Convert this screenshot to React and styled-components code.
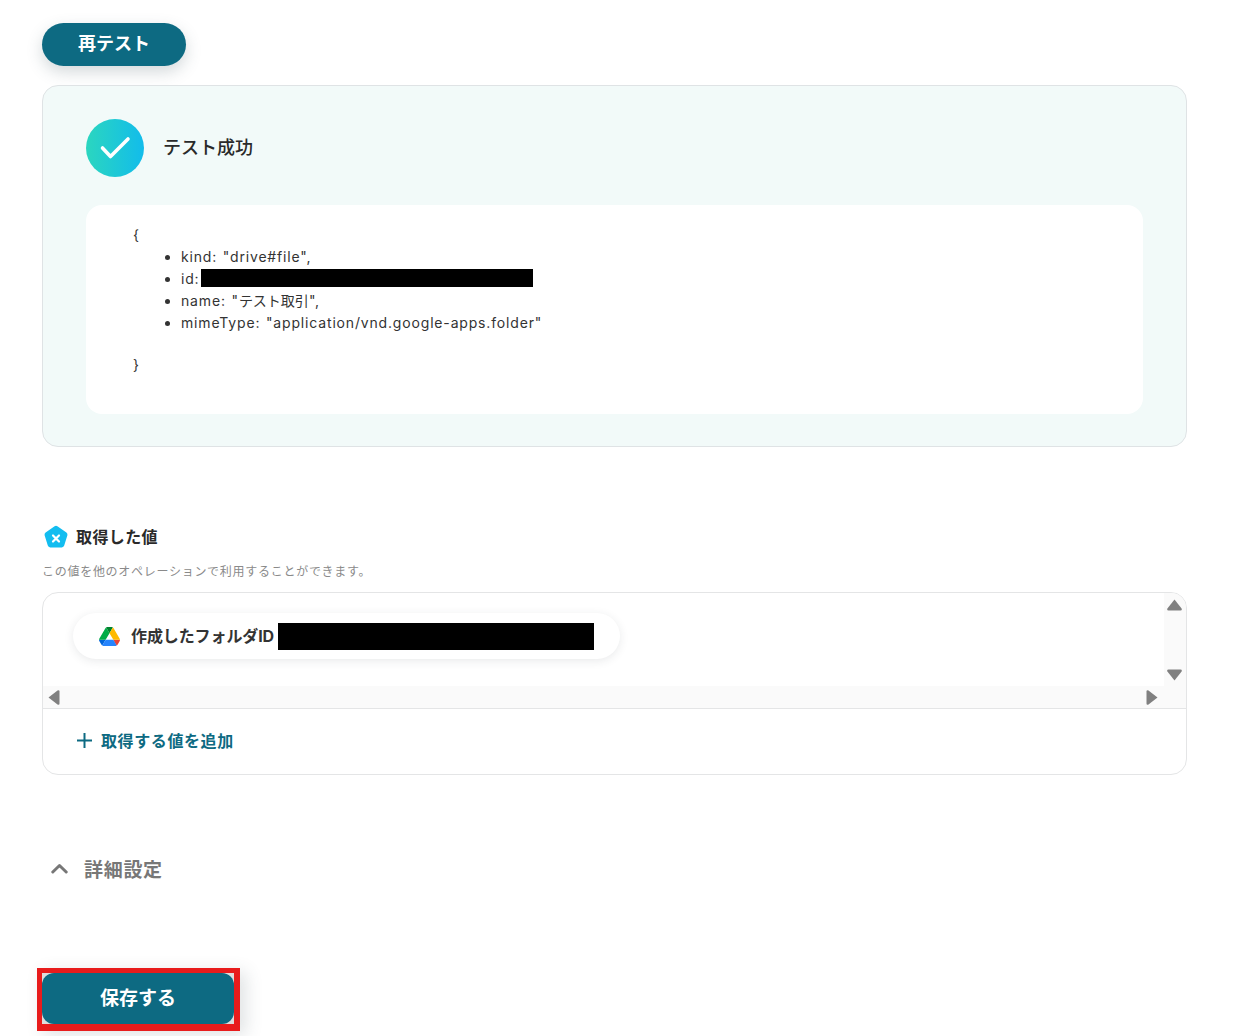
import React from 'react'
import styled, { createGlobalStyle } from 'styled-components'

const GlobalStyle = createGlobalStyle`
  html, body {
    margin: 0;
    padding: 0;
    background: #fff;
  }
  body {
    font-family: Inter, "Noto Sans CJK JP", sans-serif;
    color: #2a2a2a;
  }
`

const Page = styled.main`
  width: 1145px;
  height: 1036px;
  padding: 23px 0 0 42px;
  overflow: hidden;
`

const RetestButton = styled.button`
  display: block;
  width: 144px;
  height: 43px;
  border: 0;
  border-radius: 22px;
  background: #0d6a82;
  color: #fff;
  font: 700 18px/40px Inter, "Noto Sans CJK JP", sans-serif;
  padding: 0 0 1px;
  box-shadow: 0 6px 16px rgba(60, 80, 90, 0.22);
`

const ResultCard = styled.section`
  margin-top: 19px;
  height: 362px;
  box-sizing: border-box;
  border: 1px solid #dfe3e5;
  border-radius: 16px;
  background: #f2faf9;
  padding: 33px 43px 0;
`

const ResultHead = styled.div`
  display: flex;
  align-items: center;
  gap: 19px;
  height: 58px;
`

const CheckCircle = styled.div`
  width: 58px;
  height: 58px;
  border-radius: 50%;
  background: linear-gradient(90deg, #2bd6bf, #12bceb);
  display: flex;
  align-items: center;
  justify-content: center;
`

const ResultTitle = styled.h2`
  margin: 0;
  font-size: 18px;
  font-weight: 500;
  line-height: 26px;
`

const JsonBox = styled.div`
  margin-top: 28px;
  height: 209px;
  box-sizing: border-box;
  border-radius: 16px;
  background: #fff;
  padding: 19px 47px;
  font-size: 14px;
  line-height: 22px;
  color: #333;
`

const JsonList = styled.ul`
  margin: 0 0 20px;
  padding: 0 0 0 48px;
  letter-spacing: 0.83px;
  word-spacing: 1px;
`

const JsonKana = styled.span`
  letter-spacing: 0;
`

const Redacted = styled.span`
  display: inline-block;
  vertical-align: top;
  background: #000;
  height: ${p => p.$h}px;
  width: ${p => p.$w}px;
  margin: ${p => p.$m};
`

const SectionHead = styled.div`
  display: flex;
  align-items: center;
  gap: 8px;
  margin: 77px 0 0 2px;
  height: 26px;
`

const SectionTitle = styled.h3`
  margin: 0;
  font-size: 16px;
  font-weight: 700;
  line-height: 24px;
  letter-spacing: 0.4px;
`

const SectionNote = styled.p`
  margin: 13px 0 0;
  font-size: 12px;
  line-height: 18px;
  color: #8a8a8a;
  letter-spacing: 0.72px;
`

const ValuesBox = styled.section`
  margin-top: 11px;
  height: 183px;
  box-sizing: border-box;
  border: 1px solid #e4e5e6;
  border-radius: 16px;
  overflow: hidden;
`

const ValuesScroller = styled.div`
  display: grid;
  grid-template-columns: 1fr 22px;
  grid-template-rows: 93px 22px;
  height: 115px;
  border-bottom: 1px solid #e4e5e6;
`

const ValuesViewport = styled.div`
  padding: 20px 0 0 30px;
`

const ValueChip = styled.div`
  display: flex;
  align-items: center;
  width: 547px;
  height: 46px;
  box-sizing: border-box;
  padding-left: 26px;
  border-radius: 23px;
  background: #fff;
  box-shadow: 0 2px 10px rgba(40, 50, 60, 0.1);
  font-size: 16px;
  font-weight: 700;
  color: #333;
`

const ChipLabel = styled.span`
  margin-left: 11px;
  padding-bottom: 2px;
  letter-spacing: -0.1px;
`

const TrackY = styled.div`
  grid-row: 1;
  grid-column: 2;
  background: #fafafa;
  display: flex;
  flex-direction: column;
  justify-content: space-between;
  align-items: center;
  padding: 6px 2px 5px 0;
`

const TrackX = styled.div`
  grid-row: 2;
  grid-column: 1 / 3;
  background: #fafafa;
  display: flex;
  justify-content: space-between;
  align-items: center;
  padding: 0 28px 0 5px;
`

const AddRow = styled.div`
  display: flex;
  align-items: center;
  gap: 9px;
  height: 62px;
  padding: 0 0 4px 34px;
  color: #0d6a82;
  font-size: 16px;
  font-weight: 700;
  letter-spacing: 0.6px;
`

const DetailsToggle = styled.div`
  display: flex;
  align-items: center;
  gap: 16px;
  margin: 79px 0 0 9px;
  height: 28px;
  color: #777;
  font-size: 19px;
  font-weight: 700;
  letter-spacing: 0.7px;
`

const SaveFrame = styled.div`
  margin: 86px 0 0 -5px;
  width: 192px;
  border-style: solid;
  border-color: #e81c1c;
  border-width: 5px 6px 7px 5px;
  background: #ddd;
  box-shadow: 6px 4px 16px rgba(60, 80, 90, 0.16);
`

const SaveButton = styled.button`
  display: block;
  width: 100%;
  height: 51px;
  border: 0;
  border-radius: 12px;
  background: #0d6a82;
  color: #fff;
  font: 700 19px/27px Inter, "Noto Sans CJK JP", sans-serif;
  padding: 0;
`

const Arrow = ({ dir }) => {
  const shapes = {
    up: 'M7.5 .5 L14.6 9.5 Q15.4 11.5 13.5 11.5 L1.5 11.5 Q-.4 11.5 .4 9.5 Z',
    down: 'M7.5 11.5 L14.6 2.5 Q15.4 .5 13.5 .5 L1.5 .5 Q-.4 .5 .4 2.5 Z',
    left: 'M.5 7.5 L9.5 .4 Q11.5 -.4 11.5 1.5 L11.5 13.5 Q11.5 15.4 9.5 14.6 Z',
    right: 'M11.5 7.5 L2.5 .4 Q.5 -.4 .5 1.5 L.5 13.5 Q.5 15.4 2.5 14.6 Z',
  }
  const vertical = dir === 'up' || dir === 'down'
  return (
    <svg width={vertical ? 15 : 12} height={vertical ? 12 : 15} viewBox={vertical ? '0 0 15 12' : '0 0 12 15'}>
      <path d={shapes[dir]} fill="#808080" />
    </svg>
  )
}

const DriveIcon = () => (
  <svg width="21" height="19" viewBox="0 0 87.3 78">
    <path d="m6.6 66.85 3.85 6.65c.8 1.4 1.95 2.5 3.3 3.3l13.75-23.8h-27.5c0 1.55.4 3.1 1.2 4.5z" fill="#0066da" />
    <path d="m43.65 25-13.75-23.8c-1.35.8-2.5 1.9-3.3 3.3l-25.4 44a9.06 9.06 0 0 0-1.2 4.5h27.5z" fill="#00ac47" />
    <path d="m73.55 76.8c1.35-.8 2.5-1.9 3.3-3.3l1.6-2.75 7.65-13.25c.8-1.4 1.2-2.95 1.2-4.5h-27.5l5.85 11.5z" fill="#ea4335" />
    <path d="m43.65 25 13.75-23.8c-1.35-.8-2.9-1.2-4.5-1.2h-18.5c-1.6 0-3.15.45-4.5 1.2z" fill="#00832d" />
    <path d="m59.8 53h-32.3l-13.75 23.8c1.35.8 2.9 1.2 4.5 1.2h50.8c1.6 0 3.15-.45 4.5-1.2z" fill="#2684fc" />
    <path d="m73.4 26.5-12.7-22c-.8-1.4-1.95-2.5-3.3-3.3l-13.75 23.8 16.15 28h27.45c0-1.55-.4-3.1-1.2-4.5z" fill="#ffba00" />
  </svg>
)

const App = () => (
  <>
    <GlobalStyle />
    <Page>
      <RetestButton>再テスト</RetestButton>

      <ResultCard>
        <ResultHead>
          <CheckCircle>
            <svg width="32" height="24" viewBox="0 0 32 24">
              <path d="M3.5 12 L11.5 20.5 L29 3" fill="none" stroke="#fff" strokeWidth="3.6" strokeLinecap="round" strokeLinejoin="round" />
            </svg>
          </CheckCircle>
          <ResultTitle>テスト成功</ResultTitle>
        </ResultHead>
        <JsonBox>
          <div>{'{'}</div>
          <JsonList>
            <li>kind: "drive#file",</li>
            <li>id: <Redacted $w={332} $h={18} $m="1px 0 0 -4px" /></li>
            <li>name: "<JsonKana>テスト取引</JsonKana>",</li>
            <li>mimeType: "application/vnd.google-apps.folder"</li>
          </JsonList>
          <div>{'}'}</div>
        </JsonBox>
      </ResultCard>

      <SectionHead>
        <svg width="24" height="24" viewBox="0 0 24 24">
          <path d="M10.6 1.2 Q12 .3 13.4 1.2 L22.4 7.6 Q23.8 8.6 23.4 10.2 L20.2 20.6 Q19.7 22.4 17.8 22.4 L6.2 22.4 Q4.3 22.4 3.8 20.6 L.6 10.2 Q.2 8.6 1.6 7.6 Z" fill="#13bdf0" />
          <path d="M9 10.5 L15 16.5 M15 10.5 L9 16.5" stroke="#fff" strokeWidth="2.2" strokeLinecap="round" />
        </svg>
        <SectionTitle>取得した値</SectionTitle>
      </SectionHead>
      <SectionNote>この値を他のオペレーションで利用することができます。</SectionNote>

      <ValuesBox>
        <ValuesScroller>
          <ValuesViewport>
            <ValueChip>
              <DriveIcon />
              <ChipLabel>作成したフォルダID</ChipLabel>
              <Redacted $w={316} $h={27} $m="0 0 0 4px" />
            </ValueChip>
          </ValuesViewport>
          <TrackY>
            <Arrow dir="up" />
            <Arrow dir="down" />
          </TrackY>
          <TrackX>
            <Arrow dir="left" />
            <Arrow dir="right" />
          </TrackX>
        </ValuesScroller>
        <AddRow>
          <svg width="15" height="15" viewBox="0 0 15 15">
            <path d="M7.5 0 V15 M0 7.5 H15" stroke="#0d6a82" strokeWidth="2" />
          </svg>
          取得する値を追加
        </AddRow>
      </ValuesBox>

      <DetailsToggle>
        <svg width="17" height="11" viewBox="0 0 17 11">
          <path d="M1.8 9 L8.5 2.5 L15.2 9" fill="none" stroke="#777" strokeWidth="3" strokeLinecap="round" strokeLinejoin="round" />
        </svg>
        詳細設定
      </DetailsToggle>

      <SaveFrame>
        <SaveButton>保存する</SaveButton>
      </SaveFrame>
    </Page>
  </>
)

export default App
